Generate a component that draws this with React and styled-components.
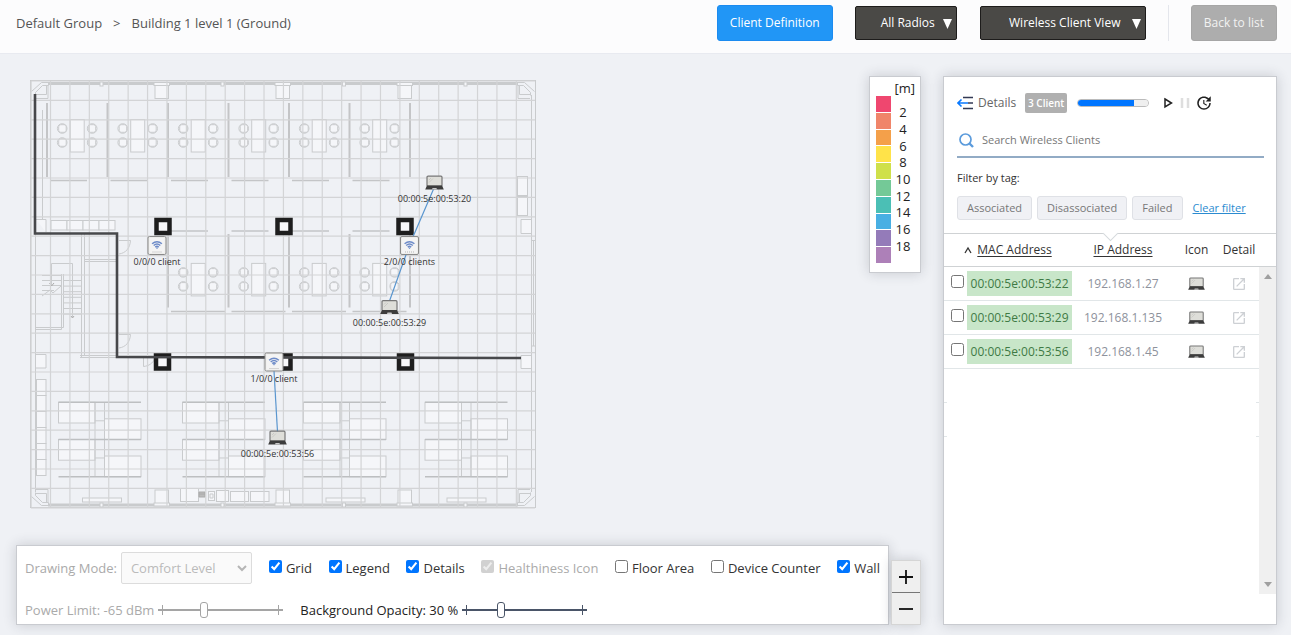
import React from 'react';
import styled, { createGlobalStyle, css } from 'styled-components';
import { MdUpdate, MdOpenInNew } from 'react-icons/md';

const GlobalStyle = createGlobalStyle`
	* {
		box-sizing: border-box;
	}
	body {
		margin: 0;
		background: #eff1f5;
		color: #333;
		font-family: 'Open Sans', 'Noto Sans', sans-serif;
		font-size: 13px;
		line-height: 18px;
	}
	button, input, select {
		font: inherit;
	}
`;

const panel = css`
	background: white;
	border: 1px solid #c9cbd0;
	box-shadow: 0 0 12px rgba(40, 45, 60, 0.2);
`;

const Page = styled.div`
	display: flex;
	flex-direction: column;
	min-height: 100vh;
`;

const Header = styled.header`
	display: flex;
	align-items: center;
	justify-content: space-between;
	height: 54px;
	padding: 0 14px 8px 16px;
	background: #fcfcfd;
	border-bottom: 1px solid #e8eaf0;
`;

const Breadcrumb = styled.nav`
	display: flex;
	gap: 11px;
	color: #555;
`;

const Crumb = styled.a`
	color: inherit;
	text-decoration: none;
`;

const Actions = styled.div`
	display: flex;
	align-items: center;
	gap: 22px;
`;

const HeaderButton = styled.button`
	height: 36px;
	padding: 0 12px;
	border: 1px solid ${props => (props.$muted ? '#a6a6a6' : '#1b8bf0')};
	border-radius: 3px;
	background: ${props => (props.$muted ? '#adadad' : '#2196f6')};
	color: ${props => (props.$muted ? '#f2f2f2' : 'white')};
	font-size: 12px;
`;

const SelectWrap = styled.div`
	position: relative;
	margin-right: ${props => (props.$last ? '0' : '1px')};
`;

const DarkSelect = styled.select`
	appearance: none;
	display: block;
	height: 34px;
	width: ${props => props.$width};
	padding: 0 18px 0 22px;
	border: 1px solid #1d1c1b;
	border-radius: 2px;
	background: #4a4946;
	color: white;
	font-size: 12px;
	text-align: center;
`;

const SelectArrow = styled.svg`
	position: absolute;
	top: 13px;
	right: 5px;
	width: 9px;
	height: 10px;
	fill: white;
	pointer-events: none;
`;

const Divider = styled.span`
	width: 1px;
	height: 36px;
	background: #e4e6ec;
`;

const Main = styled.main`
	display: flex;
	flex: 1;
	gap: 22px;
	padding: 22px 14px 10px 16px;
`;

const Workspace = styled.div`
	display: flex;
	flex: 1;
	flex-direction: column;
	justify-content: space-between;
	min-width: 0;
`;

const MapRow = styled.div`
	display: flex;
	align-items: flex-start;
	justify-content: space-between;
`;

const FloorMap = styled.svg`
	display: block;
	width: 507px;
	height: 430px;
	margin: 3px 14px 0;
	flex-shrink: 0;
	font-family: 'Open Sans', 'Noto Sans', sans-serif;
	font-size: 9px;
`;

const LegendPanel = styled.aside`
	${panel}
	width: 52px;
	height: 197px;
	padding: 3px 5px 3px 6px;
	color: #222;
	line-height: 16px;
`;

const LegendUnit = styled.div`
	text-align: right;
`;

const LegendScale = styled.div`
	display: grid;
	grid-template-columns: 15px 1fr;
	height: 167px;
`;

const Swatches = styled.div`
	display: grid;
	grid-template-rows: repeat(10, 1fr);
	gap: 1px;
`;

const Swatch = styled.span`
	background: ${props => props.$color};
`;

const Steps = styled.div`
	display: grid;
	grid-template-rows: repeat(9, 1fr);
	padding: 8px 0 9px;
	align-items: center;
	text-align: center;
`;

const BottomRow = styled.div`
	display: flex;
	align-items: flex-end;
	gap: 2px;
`;

const ControlBar = styled.section`
	${panel}
	display: flex;
	flex: 1;
	flex-direction: column;
	gap: 17px;
	height: 80px;
	padding: 6px 8px;
`;

const ControlRow = styled.div`
	display: flex;
	align-items: center;
	white-space: nowrap;
`;

const ModeLabel = styled.label`
	margin-right: 4px;
	color: #aaa;
`;

const ModeWrap = styled.div`
	position: relative;
	margin-right: 17px;
`;

const ModeSelect = styled.select`
	appearance: none;
	display: block;
	width: 131px;
	height: 32px;
	padding: 0 9px;
	border: 1px solid #dcdcdc;
	border-radius: 2px;
	background: #fafafa;
	color: #bbb;
	opacity: 1;
`;

const ModeArrow = styled.svg`
	position: absolute;
	top: 11px;
	right: 4px;
	width: 12px;
	height: 10px;
	pointer-events: none;
`;

const Checks = styled.div`
	display: flex;
	flex: 1;
	justify-content: space-between;
`;

const CheckLabel = styled.label`
	display: flex;
	align-items: center;
	gap: 4px;
	color: ${props => (props.$off ? '#aaa' : '#333')};
`;

const CheckBox = styled.input`
	width: 13px;
	height: 13px;
	margin: 0 0 4px;
`;

const RangeLabel = styled.label`
	display: flex;
	align-items: center;
	gap: 4px;
	margin-right: 17px;
	color: ${props => (props.$off ? '#aaa' : '#222')};
`;

const Range = styled.input`
	appearance: none;
	width: 125px;
	height: 16px;
	margin: 0;
	--line: ${props => (props.disabled ? '#a5a5a5' : '#4a5568')};
	background:
		linear-gradient(var(--line), var(--line)) 4px 50% / 1px 10px no-repeat,
		linear-gradient(var(--line), var(--line)) 120px 50% / 1px 10px no-repeat,
		linear-gradient(var(--line), var(--line)) 0 50% / 100% 2px no-repeat;
	&::-webkit-slider-thumb {
		appearance: none;
		width: 8px;
		height: 16px;
		border: 1px solid var(--line);
		border-radius: 3px;
		background: white;
	}
`;

const Zoom = styled.div`
	display: flex;
	flex-direction: column;
	width: 30px;
	border: 1px solid #d5d5d5;
	box-shadow: 0 0 12px rgba(40, 45, 60, 0.2);
`;

const ZoomButton = styled.button`
	display: flex;
	align-items: center;
	justify-content: center;
	height: ${props => (props.$first ? '31px' : '32px')};
	padding: 0;
	border: 0;
	border-top: ${props => (props.$first ? '0' : '1px solid #777')};
	background: #efefef;
`;

const Details = styled.section`
	${panel}
	display: flex;
	flex-direction: column;
	width: 334px;
`;

const DetailsTop = styled.div`
	display: flex;
	flex-direction: column;
	padding: 16px 12px 13px 13px;
	font-size: 11px;
`;

const TitleRow = styled.div`
	display: flex;
	align-items: center;
	height: 20px;
	color: #666;
	font-size: 12px;
`;

const Title = styled.span`
	margin: 0 9px 0 4px;
`;

const CountBadge = styled.span`
	width: 42px;
	margin-right: 10px;
	border-radius: 2px;
	background: #b0b0b0;
	color: white;
	font-size: 10px;
	font-weight: 600;
	line-height: 20px;
	text-align: center;
`;

const Progress = styled.progress`
	appearance: none;
	width: 72px;
	height: 8px;
	margin-right: 11px;
	border: 1px solid #bbb;
	border-radius: 4px;
	overflow: hidden;
	&::-webkit-progress-bar {
		background: #efefef;
	}
	&::-webkit-progress-value {
		background: #0075ff;
	}
`;

const IconButton = styled.button`
	display: flex;
	align-items: center;
	justify-content: center;
	padding: 0;
	border: 0;
	background: none;
	color: ${props => props.$color || '#222'};
`;

const SearchRow = styled.label`
	display: flex;
	align-items: center;
	gap: 8px;
	height: 34px;
	margin: 11px 0;
	padding-left: 2px;
	border-bottom: 2px solid #92abc5;
`;

const SearchInput = styled.input`
	flex: 1;
	padding: 0;
	border: 0;
	outline: 0;
	&::placeholder {
		color: #777;
	}
`;

const TagRow = styled.div`
	display: flex;
	align-items: center;
	gap: 5px;
	margin-top: 9px;
`;

const Tag = styled.button`
	height: 24px;
	padding: 0 9px;
	border: 1px solid #dfe1e6;
	border-radius: 3px;
	background: #f0f1f5;
	color: #777;
`;

const ClearLink = styled.a`
	margin-left: 5px;
	color: #2b8bd0;
`;

const TableArea = styled.div`
	position: relative;
	display: flex;
	flex: 1;
	margin-bottom: 30px;
	border-top: 1px solid #cfd2d4;
`;

const Notch = styled.span`
	position: absolute;
	top: -6px;
	left: 161px;
	width: 11px;
	height: 11px;
	border: solid #d5dadd;
	border-width: 0 1px 1px 0;
	background: white;
	transform: rotate(45deg);
`;

const TableColumn = styled.div`
	flex: 1;
`;

const Table = styled.table`
	width: 100%;
	table-layout: fixed;
	border-collapse: separate;
	border-spacing: 0;
	text-align: center;
`;

const HeadCell = styled.th`
	height: 33px;
	padding: 0;
	border-bottom: 1px solid #cfd2d4;
	color: #333;
	font-size: 12px;
	font-weight: 400;
`;

const SortButton = styled.button`
	padding: 0;
	border: 0;
	background: none;
	color: inherit;
	text-decoration: underline;
	text-underline-offset: 2px;
`;

const SortMark = styled.svg`
	width: 8px;
	height: 8px;
	margin-right: 5px;
`;

const Cell = styled.td`
	height: 34px;
	padding: 0;
	border-bottom: 1px solid #e1e6e8;
	color: #8e929c;
	font-size: 12px;
	svg {
		display: block;
		margin: auto;
	}
`;

const CheckCell = styled(Cell)`
	padding-left: 3px;
`;

const MacTag = styled.label`
	display: block;
	background: #c8e6c9;
	color: #3f7a45;
	line-height: 25px;
`;

const EmptyRow = styled.div`
	height: 34px;
	background:
		linear-gradient(#e1e6e8, #e1e6e8) 0 100% / 3px 1px no-repeat,
		linear-gradient(#e1e6e8, #e1e6e8) 100% 100% / 3px 1px no-repeat;
`;

const ScrollColumn = styled.div`
	display: flex;
	flex-direction: column;
	width: 17px;
`;

const ScrollCorner = styled.div`
	height: 33px;
	border-bottom: 1px solid #cfd2d4;
`;

const ScrollTrack = styled.div`
	display: flex;
	flex: 1;
	flex-direction: column;
	align-items: center;
	justify-content: space-between;
	padding: 7px 0;
	background: #f0f0f0;
`;

const LEGEND_COLORS = [
	'#ef476f', '#f0856a', '#f4a04a', '#ffe349', '#cfe04a',
	'#74c997', '#4bbfb5', '#48afe3', '#947bb9', '#ad80b8',
];
const LEGEND_STEPS = [2, 4, 6, 8, 10, 12, 14, 16, 18];

const CLIENTS = [
	{ mac: '00:00:5e:00:53:22', ip: '192.168.1.27' },
	{ mac: '00:00:5e:00:53:29', ip: '192.168.1.135' },
	{ mac: '00:00:5e:00:53:56', ip: '192.168.1.45' },
];

const OPTIONS = [
	{ label: 'Grid', on: true },
	{ label: 'Legend', on: true },
	{ label: 'Details', on: true },
	{ label: 'Healthiness Icon', on: true, off: true },
	{ label: 'Floor Area' },
	{ label: 'Device Counter' },
	{ label: 'Wall', on: true },
];

const range = n => Array.from({ length: n }, (_, i) => i);

// 19x15 laptop, shared by the map and the table
const Laptop = () => (
	<g>
		<rect x="2" y="0.7" width="15" height="10" rx="1" fill="#deded9" stroke="#777" strokeWidth="1.2" />
		<path d="M4 7 L8 3 M4 4.5 L6 2.5" stroke="#c4c4c0" strokeWidth="0.8" />
		<path d="M2 10 H17 L18.8 14 H0.2 Z" fill="#3c3c3c" />
		<path d="M7.5 12.4 H11.5 L12 14 H7 Z" fill="#c9c9c9" />
	</g>
);

const AccessPoint = ({ x, y }) => (
	<g transform={`translate(${x} ${y})`}>
		<rect x="0.5" y="0.5" width="18" height="18" rx="1.5" fill="#eeeeec" stroke="#8a8a8a" />
		<rect x="2" y="2" width="15" height="15" fill="#f4f4f4" />
		<g fill="none" stroke="#6d8bc8" strokeWidth="1.5">
			<path d="M4.6 7.8 Q9.5 3.6 14.4 7.8" />
			<path d="M6.2 9.5 Q9.5 6.6 12.8 9.5" />
			<path d="M7.8 11.1 Q9.5 9.6 11.2 11.1" />
		</g>
		<path d="M8.3 11.7 H10.7 L9.5 13 Z" fill="#5f82c4" />
		<path d="M5 16 H14" stroke="#b5b5b5" strokeDasharray="1 1" />
	</g>
);

const Cluster = ({ x, y }) => (
	<g transform={`translate(${x} ${y})`}>
		<rect x="0" y="0" width="14" height="32.5" />
		{[-8, 22].map(cx => [9, 23].map(cy => (
			<g key={`${cx}-${cy}`}>
				<circle cx={cx} cy={cy} r="4.8" />
				<rect x={cx > 0 ? cx - 4 : cx - 3.5} y={cy - 3.8} width="7.5" height="7.6" rx="2" />
			</g>
		)))}
	</g>
);

const BedGroup = ({ x }) => (
	<g transform={`translate(${x} 402.3)`}>
		{[0, 37.2].map(y => (
			<g key={y}>
				<rect x="0" y={y} width="36.5" height="20.7" />
				<rect x="46" y={y + 16.5} width="36.5" height="20.7" />
				<path d={`M36.5 ${y + 18.5} h9.5`} />
			</g>
		))}
		<path d="M36.5 0 V74.4 M46 0 V74.4" />
		<path d="M0 0 H82.5 M0 37.2 H82.5 M0 74.4 H82.5" stroke="#bdbfc1" strokeWidth="1.4" />
	</g>
);

const Corner = ({ transform }) => (
	<g transform={transform}>
		<path d="M1 11 L11 2 H18 V5 H12 L5 12 V15 M16 5 V14 H5.5 M17.5 5 V18 H5.5" />
	</g>
);

const Plan = () => (
	<g fill="none" stroke="#c9cbcd">
		<g fill="#f5f6f9">
			<rect x="30.5" y="80.5" width="505" height="427" fill="none" />
			{range(6).map(i => <Cluster key={i} x={70.2 + i * 60.5} y={119.5} />)}
			{range(4).map(i => <Cluster key={i} x={191.2 + i * 60.5} y={263.4} />)}
			{[58.5, 182.5, 303.5, 425].map(x => <BedGroup key={x} x={x} />)}
			{[155, 276, 398].map(x => (
				<g key={x}>
					<rect x={x} y="83.5" width="13.5" height="15" />
					<rect x={x} y="490" width="13.5" height="15" />
				</g>
			))}
			{range(6).map(i => <rect key={i} x="36.5" y={379.5 + i * 16} width="9.5" height="16" />)}
			{range(4).map(i => <rect key={i} x={51 + i * 16} y="220.5" width="16" height="9.5" />)}
			<rect x="517.5" y="176.5" width="10" height="19" />
			<rect x="517.5" y="196.5" width="10" height="19" />
			<path d="M531 219.5 H521 V233.5 H531 M531 355.5 H521 V368.5 H531 M36 219.5 H46 V232 M36 354.5 H46 V368 H36" />
			<rect x="180.5" y="488.5" width="18" height="13" />
			<rect x="208.5" y="491.5" width="6" height="9" />
			<rect x="216.5" y="490.5" width="12" height="11" />
			<rect x="230.5" y="491.5" width="18" height="10" />
			<rect x="250.5" y="491.5" width="18.5" height="10" />
			<rect x="82.5" y="498" width="39" height="4" />
			<rect x="326" y="498" width="39" height="4" />
			<rect x="447" y="498" width="39" height="4" />
		</g>
		<path d="M199 492 h6 v5 h-6 z M199 494 h6" fill="#bbb" stroke="#aaa" />
		<path d="M210 494 h3 v4 h-3 z" />

		{/* outer walls and windows */}
		<path d="M35.5 95 V492 M531.5 95 V492" />
		<path d="M48 83.5 H518 M48 505 H518" strokeWidth="3" />
		<path d="M531.5 240.5 H535.5 V346 H531.5 Z M533.5 240 V346" />
		<g fill="#f5f6f9">
			{[101.5, 222.5, 344, 465.5].map(x => (
				<g key={x}>
					<rect x={x - 1.5} y="82" width="3" height="4" />
					<rect x={x - 1.5} y="503" width="3" height="4" />
				</g>
			))}
			{[154, 275, 397].map(x => (
				<g key={x}>
					<rect x={x} y="82.5" width="15.5" height="3" />
					<rect x={x} y="503" width="15.5" height="3" />
				</g>
			))}
		</g>
		<Corner transform="translate(30.5 80.5)" />
		<Corner transform="translate(535.5 80.5) scale(-1 1)" />
		<Corner transform="translate(30.5 507.5) scale(1 -1)" />
		<Corner transform="translate(535.5 507.5) scale(-1 -1)" />

		{/* booth partitions */}
		<g stroke="#c4c5c7" strokeWidth="2">
			{range(7).map(i => <path key={i} d={`M${47 + i * 60.5} 103 V177`} />)}
			{range(5).map(i => <path key={i} d={`M${168 + i * 60.5} 234 V307.5`} />)}
			{range(6).map(i => <path key={i} d={`M${50 + i * 60.5} 180.5 h37`} strokeWidth="1.5" />)}
			{range(4).map(i => (
				<path key={i} d={`M${171 + i * 60.5} 231 h37 M${171 + i * 60.5} 311.4 h54`} strokeWidth="1.5" />
			))}
		</g>

		{/* stairs and the room beside the lift */}
		<path d="M42.5 110 V220 M81.5 233 V357 M84.5 233 V355 M84.5 259.5 H116 M84.5 261.5 H116 M80 355.5 H154 M80 357.5 H117" />
		<path d="M61.5 274 V329.5 H36 M63.5 274 V327.5 H36 M51.5 285 V263.5 H72.5 V317" />
		{range(7).map(i => <path key={i} d={`M63 ${280.5 + i * 5.6} h19`} />)}
		<path d="M42 275.5 H61 M42 280.5 H61 M42 285.5 H61 M42 290.5 H54 M42 296 L50 290 L53 293 L61 286" />
		<path d="M49.5 283 L51.5 286 L54 283 M71 316 L72.5 318 L74 316" stroke="#aaa" />
		<path d="M119 240.5 H130.5 C130 248 126 253 119 254 M119 334.5 H130.5 C130 342 126 347 119 348 M143.5 356 V366.5 C149 366 153 363 154.5 359" />
	</g>
);

const Node = ({ x, y, label }) => (
	<g>
		<g transform={`translate(${x - 9.5} ${y})`}><Laptop /></g>
		<text x={x} y={y + 26} textAnchor="middle" fill="#333">{label}</text>
	</g>
);

const Pillars = () => [[163, 226.5], [284, 226.5], [405, 226.5], [162.5, 362], [284, 362], [405.5, 362]].map(([x, y]) => (
	<rect key={`${x}-${y}`} x={x - 6.5} y={y - 6.5} width="13" height="13" fill="#f8f8fa" stroke="#1e1e1e" strokeWidth="4.5" />
));

const Map = () => (
	<FloorMap viewBox="30 79 507 430" role="img" aria-label="Floor plan">
		<Plan />
		<g stroke="#d3d4d6" strokeWidth="1.2">
			{range(26).map(i => <path key={i} d={`M${31.1 + i * 19.41} 81 V507`} />)}
			{range(23).map(i => <path key={i} d={`M31 ${81 + i * 19.4} H535`} />)}
		</g>
		<Pillars />
		<path d="M35 94 V233.5 H117 V357 L521 358" fill="none" stroke="#47484b" strokeWidth="2.6" />
		<g stroke="#5a96cf" strokeWidth="1.2">
			<path d="M434 188 L409.5 245 M409.5 245 L389.5 301" />
			<path d="M273.5 362 L277.5 432" />
		</g>
		<AccessPoint x={147.5} y={236} />
		<AccessPoint x={400} y={236} />
		<AccessPoint x={264.5} y={352.5} />
		<g fill="#333" textAnchor="middle">
			<text x="157" y="265">0/0/0 client</text>
			<text x="409.5" y="265">2/0/0 clients</text>
			<text x="274" y="381.5">1/0/0 client</text>
		</g>
		<Node x={434.5} y={175.5} label="00:00:5e:00:53:20" />
		<Node x={389.5} y={300} label="00:00:5e:00:53:29" />
		<Node x={277.5} y={430.5} label="00:00:5e:00:53:56" />
	</FloorMap>
);

const Legend = () => (
	<LegendPanel>
		<LegendUnit>[m]</LegendUnit>
		<LegendScale>
			<Swatches>
				{LEGEND_COLORS.map(color => <Swatch key={color} $color={color} />)}
			</Swatches>
			<Steps>
				{LEGEND_STEPS.map(step => <span key={step}>{step}</span>)}
			</Steps>
		</LegendScale>
	</LegendPanel>
);

const Controls = () => (
	<ControlBar>
		<ControlRow>
			<ModeLabel htmlFor="mode">Drawing Mode:</ModeLabel>
			<ModeWrap>
				<ModeSelect id="mode" disabled>
					<option>Comfort Level</option>
				</ModeSelect>
				<ModeArrow viewBox="0 0 12 10">
					<path d="M2 3 L6 7 L10 3" fill="none" stroke="#b5b5b5" strokeWidth="2" />
				</ModeArrow>
			</ModeWrap>
			<Checks>
				{OPTIONS.map(({ label, on, off }) => (
					<CheckLabel key={label} $off={off}>
						<CheckBox type="checkbox" defaultChecked={on} disabled={off} />
						{label}
					</CheckLabel>
				))}
			</Checks>
		</ControlRow>
		<ControlRow>
			<RangeLabel $off>
				Power Limit: -65 dBm
				<Range type="range" min="0" max="100" defaultValue="36" disabled />
			</RangeLabel>
			<RangeLabel>
				Background Opacity: 30 %
				<Range type="range" min="0" max="100" defaultValue="30" />
			</RangeLabel>
		</ControlRow>
	</ControlBar>
);

const ClientTable = () => (
	<TableArea>
		<Notch />
		<TableColumn>
			<Table>
				<colgroup>
					<col width="23" />
					<col width="105" />
					<col width="102" />
					<col width="45" />
					<col />
				</colgroup>
				<thead>
					<tr>
						<HeadCell colSpan="2">
							<SortMark viewBox="0 0 8 8">
								<path d="M1 7 L4 2 L7 7" fill="none" stroke="#333" strokeWidth="1.3" />
							</SortMark>
							<SortButton>MAC Address</SortButton>
						</HeadCell>
						<HeadCell><SortButton>IP Address</SortButton></HeadCell>
						<HeadCell>Icon</HeadCell>
						<HeadCell>Detail</HeadCell>
					</tr>
				</thead>
				<tbody>
					{CLIENTS.map(({ mac, ip }) => (
						<tr key={mac}>
							<CheckCell><CheckBox type="checkbox" id={mac} /></CheckCell>
							<Cell><MacTag htmlFor={mac}>{mac}</MacTag></Cell>
							<Cell>{ip}</Cell>
							<Cell><svg width="17" height="14" viewBox="0 0 19 15"><Laptop /></svg></Cell>
							<Cell>
								<IconButton as="a" href="#detail" aria-label={`Detail of ${mac}`} $color="#cdd0d4">
									<MdOpenInNew size={16} />
								</IconButton>
							</Cell>
						</tr>
					))}
				</tbody>
			</Table>
			<EmptyRow />
			<EmptyRow />
		</TableColumn>
		<ScrollColumn>
			<ScrollCorner />
			<ScrollTrack>
				<svg width="8" height="5"><path d="M0 5 L4 0 L8 5 Z" fill="#a0a0a0" /></svg>
				<svg width="8" height="5"><path d="M0 0 L4 5 L8 0 Z" fill="#a0a0a0" /></svg>
			</ScrollTrack>
		</ScrollColumn>
	</TableArea>
);

const DetailsPanel = () => (
	<Details>
		<DetailsTop>
			<TitleRow>
				<svg width="17" height="14" viewBox="0 0 17 14" fill="none" strokeWidth="1.6">
					<path d="M6 1.5 H16 M11 7 H16 M6 12.5 H16" stroke="#333a55" />
					<path d="M1 7 H11 M4.5 3.5 L1 7 L4.5 10.5" stroke="#0a7aff" />
				</svg>
				<Title>Details</Title>
				<CountBadge>3 Client</CountBadge>
				<Progress value="80" max="100" aria-label="Next refresh" />
				<IconButton aria-label="Play">
					<svg width="16" height="14" viewBox="0 0 16 14">
						<path d="M5 3 L11.5 7 L5 11 Z" fill="none" stroke="#222" strokeWidth="1.5" />
					</svg>
				</IconButton>
				<IconButton aria-label="Pause">
					<svg width="19" height="14" viewBox="0 0 19 14">
						<path d="M6 2 V12 M12 2 V12" stroke="#dedede" strokeWidth="2.5" />
					</svg>
				</IconButton>
				<IconButton aria-label="Refresh"><MdUpdate size={18} /></IconButton>
			</TitleRow>
			<SearchRow>
				<svg width="15" height="15" viewBox="0 0 15 15" fill="none" stroke="#5b9bdc">
					<circle cx="6.5" cy="6.5" r="5.5" strokeWidth="1.7" />
					<path d="M10.5 10.5 L14 14" strokeWidth="2.4" />
				</svg>
				<SearchInput placeholder="Search Wireless Clients" aria-label="Search Wireless Clients" />
			</SearchRow>
			<span>Filter by tag:</span>
			<TagRow>
				<Tag>Associated</Tag>
				<Tag>Disassociated</Tag>
				<Tag>Failed</Tag>
				<ClearLink href="#clear">Clear filter</ClearLink>
			</TagRow>
		</DetailsTop>
		<ClientTable />
	</Details>
);

const HeaderSelect = ({ label, value, width, last }) => (
	<SelectWrap $last={last}>
		<DarkSelect $width={width} aria-label={label}><option>{value}</option></DarkSelect>
		<SelectArrow viewBox="0 0 9 10"><path d="M0 0 H9 L4.5 10 Z" /></SelectArrow>
	</SelectWrap>
);

const App = () => (
	<Page>
		<GlobalStyle />
		<Header>
			<Breadcrumb>
				<Crumb href="#group">Default Group</Crumb>
				<span>&gt;</span>
				<Crumb href="#floor">Building 1 level 1 (Ground)</Crumb>
			</Breadcrumb>
			<Actions>
				<HeaderButton>Client Definition</HeaderButton>
				<HeaderSelect label="Radios" value="All Radios" width="102px" />
				<HeaderSelect label="View" value="Wireless Client View" width="166px" last />
				<Divider />
				<HeaderButton $muted>Back to list</HeaderButton>
			</Actions>
		</Header>
		<Main>
			<Workspace>
				<MapRow>
					<Map />
					<Legend />
				</MapRow>
				<BottomRow>
					<Controls />
					<Zoom>
						<ZoomButton $first aria-label="Zoom in">
							<svg width="16" height="16"><path d="M8 1 V15 M1 8 H15" stroke="#111" strokeWidth="1.8" /></svg>
						</ZoomButton>
						<ZoomButton aria-label="Zoom out">
							<svg width="16" height="16"><path d="M1 8 H15" stroke="#111" strokeWidth="1.8" /></svg>
						</ZoomButton>
					</Zoom>
				</BottomRow>
			</Workspace>
			<DetailsPanel />
		</Main>
	</Page>
);

export default App;
